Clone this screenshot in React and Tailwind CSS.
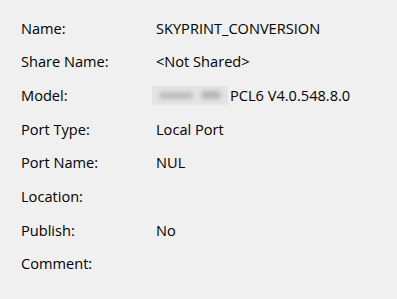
import React from "react";

const rows = [
  { label: "Name:", value: "SKYPRINT_CONVERSION" },
  { label: "Share Name:", value: "<Not Shared>" },
  { label: "Model:", value: "PCL6 V4.0.548.8.0", blurred: true },
  { label: "Port Type:", value: "Local Port" },
  { label: "Port Name:", value: "NUL" },
  { label: "Location:", value: "" },
  { label: "Publish:", value: "No" },
  { label: "Comment:", value: "" },
];

export default function App() {
  return (
    <div
      className="w-[397px] h-[299px] bg-[#f0f0f0] text-[14.6px] text-black pt-[11px] pl-[21px]"
      style={{ fontFamily: '"Open Sans", "Noto Sans", sans-serif' }}
    >
      {rows.map((r) => (
        <div key={r.label} className="flex items-center h-[33.7px] leading-none">
          <span className="w-[135px]">{r.label}</span>
          {r.blurred && (
            // redacted manufacturer name
            <span className="mr-[2px] -ml-[4px] h-[19px] w-[76px] bg-[#e4e4e4] flex items-center gap-[8px] px-[7px]">
              <span className="h-[7px] w-[34px] rounded-full bg-[#bdbdbd] blur-[2px]" />
              <span className="h-[8px] w-[20px] rounded-full bg-[#b5b5b5] blur-[2px]" />
            </span>
          )}
          <span>{r.value}</span>
        </div>
      ))}
    </div>
  );
}
